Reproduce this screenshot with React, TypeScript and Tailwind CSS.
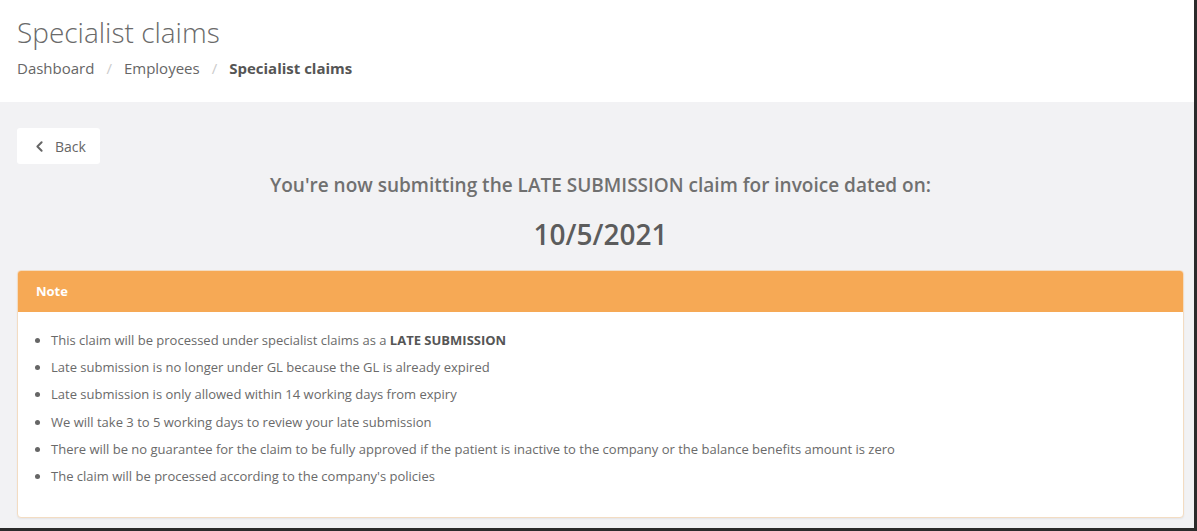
import { ChevronLeft } from "lucide-react";

const notes: React.ReactNode[] = [
  <>This claim will be processed under specialist claims as a <b className="font-bold text-[#555]">LATE SUBMISSION</b></>,
  "Late submission is no longer under GL because the GL is already expired",
  "Late submission is only allowed within 14 working days from expiry",
  "We will take 3 to 5 working days to review your late submission",
  "There will be no guarantee for the claim to be fully approved if the patient is inactive to the company or the balance benefits amount is zero",
  "The claim will be processed according to the company's policies",
];

export default function App() {
  return (
    <div
      className="w-[1197px] h-[531px] overflow-hidden flex flex-col bg-[#f2f2f4] border-r-[3px] border-b-[3px] border-[#2b2b2b] text-[#666]"
      style={{ fontFamily: '"Open Sans", sans-serif' }}
    >
      {/* page header */}
      <div className="bg-white h-[102px] px-[17px] pt-[14px]">
        <h1 className="text-[28px] font-light leading-[36px] text-[#6a6a6a]">Specialist claims</h1>
        <nav className="flex items-center gap-[12px] text-[15px] mt-[7px] leading-[22px]">
          <span>Dashboard</span>
          <span className="text-[#ccc]">/</span>
          <span>Employees</span>
          <span className="text-[#ccc]">/</span>
          <span className="font-bold text-[#555]">Specialist claims</span>
        </nav>
      </div>

      <div className="flex-1 pl-[17px] pr-[10px] pt-[26px]">
        <button className="flex items-center gap-[7px] bg-white rounded-[3px] h-[36px] w-[83px] pl-[14px] text-[14px] text-[#666]">
          <ChevronLeft size={17} strokeWidth={2.8} />
          Back
        </button>

        <p className="text-center text-[19px] font-semibold text-[#707070] leading-[26px] mt-[8px]">
          You're now submitting the LATE SUBMISSION claim for invoice dated on:
        </p>
        <p className="text-center text-[28px] font-semibold text-[#5c5c5c] leading-[38px] mt-[17px]">10/5/2021</p>

        <div className="mt-[17px] rounded-[4px] border border-[#f3dcc2] bg-white shadow-[0_1px_2px_rgba(0,0,0,0.06)] overflow-hidden">
          <div className="bg-[#f6a955] h-[41px] flex items-center px-[18px] text-white font-bold text-[13px]">Note</div>
          <ul className="pl-[33px] pr-[18px] pt-[15px] pb-[27px] text-[13px] leading-[27.2px] text-[#6a6a6a] list-disc marker:text-[#666]">
            {notes.map((n, i) => (
              <li key={i}>{n}</li>
            ))}
          </ul>
        </div>
      </div>
    </div>
  );
}
